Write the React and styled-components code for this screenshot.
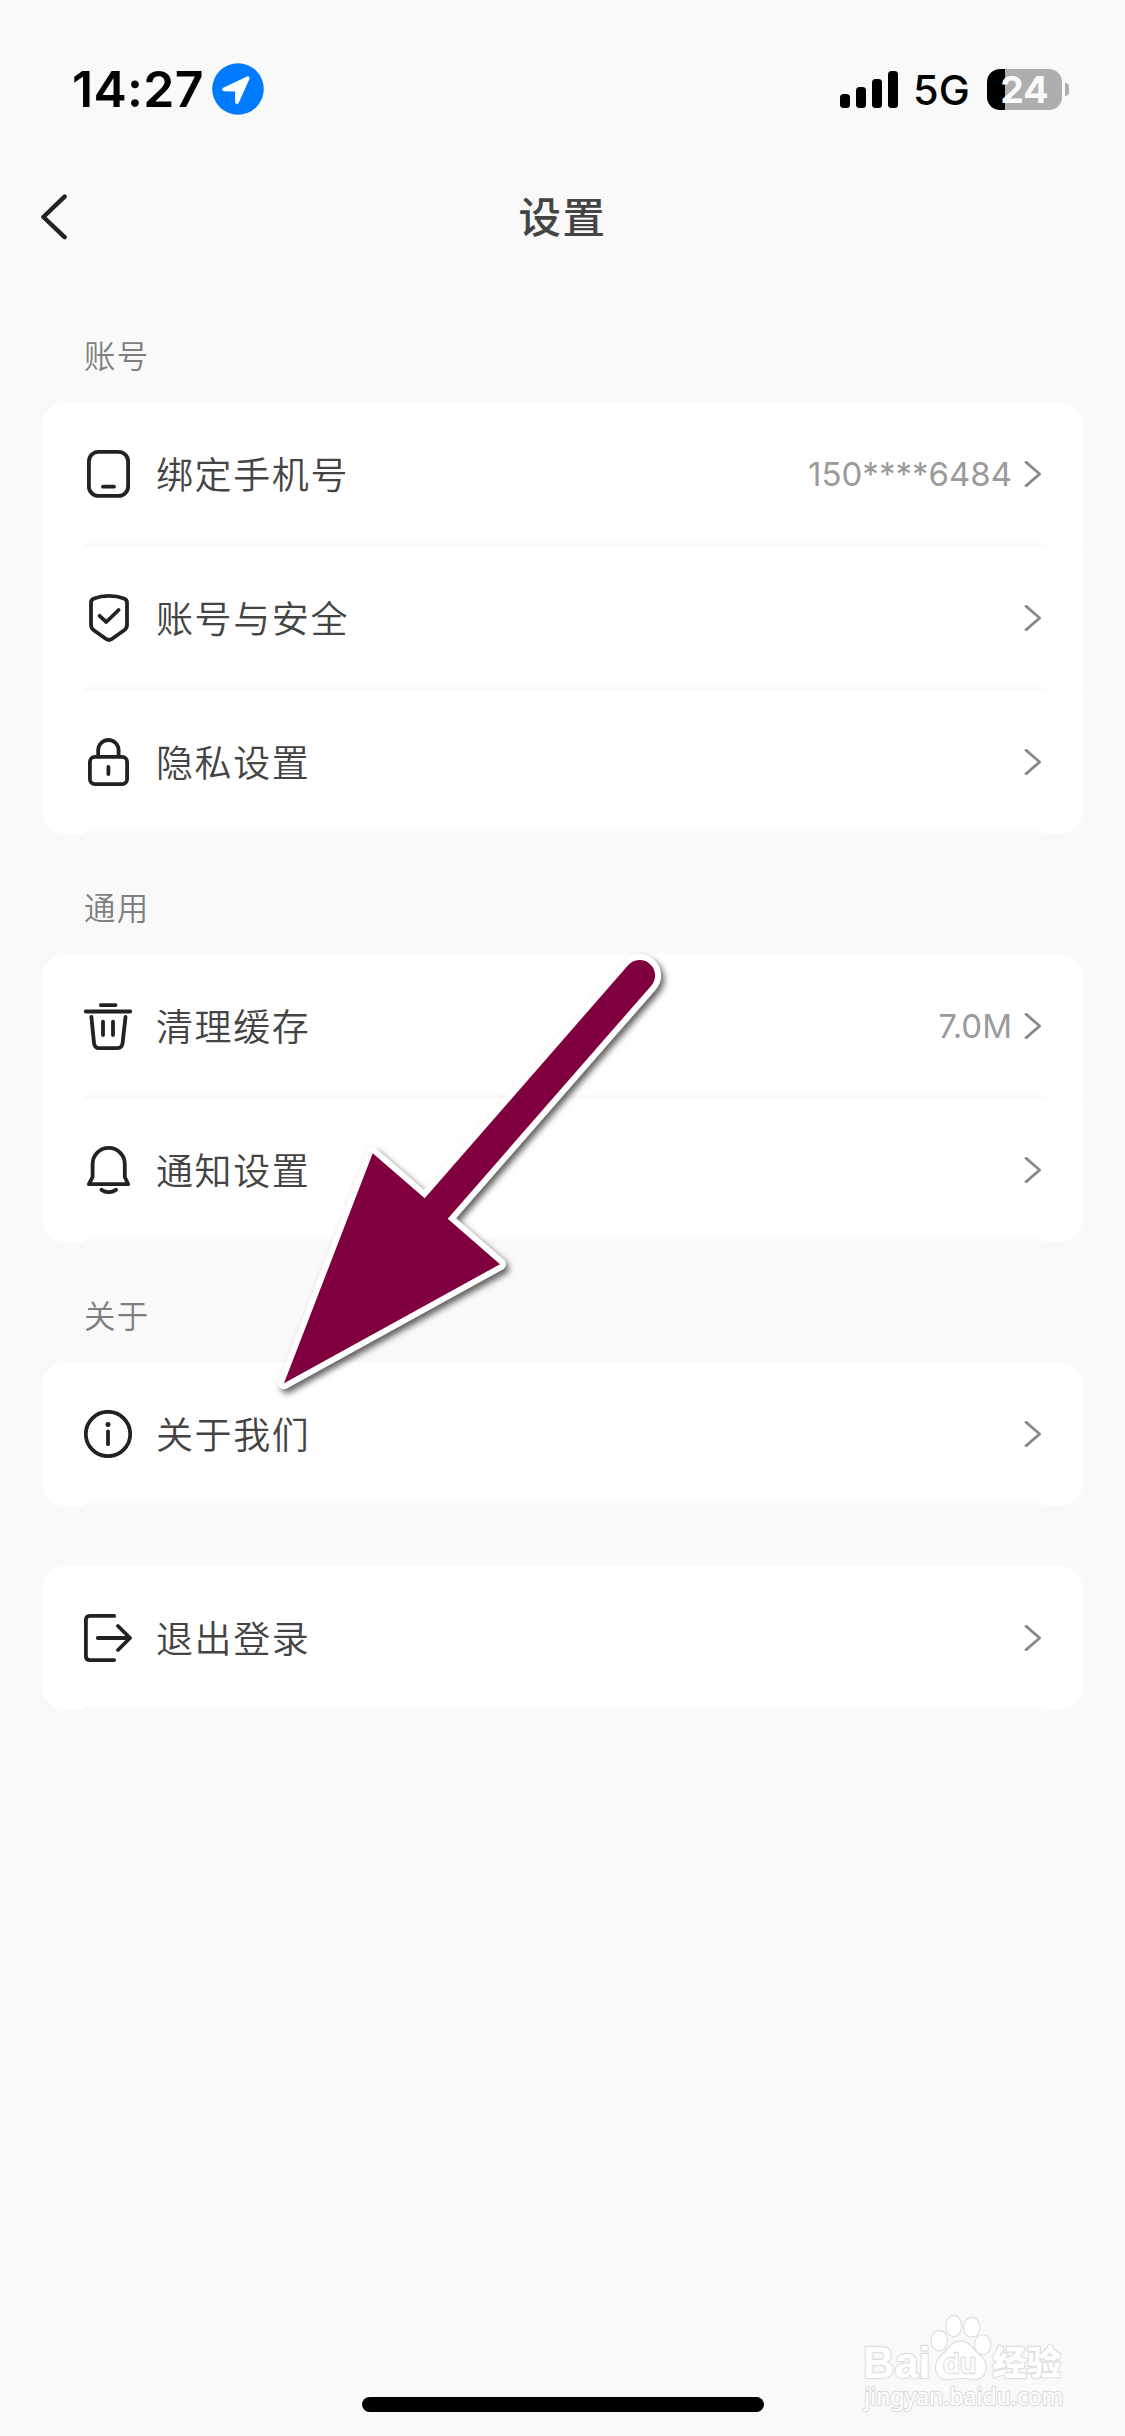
import React from 'react';
import styled, { createGlobalStyle } from 'styled-components';

const GlobalStyle = createGlobalStyle`
  * { box-sizing: border-box; }
  body { margin: 0; background: #f9f9f9; }
`;

const Screen = styled.div`
  position: relative;
  width: 1125px;
  height: 2436px;
  overflow: hidden;
  display: flex;
  flex-direction: column;
  background: #f9f9f9;
  color: #444;
  font-family: Inter, 'Noto Sans CJK SC', sans-serif;
`;

const StatusBar = styled.header`
  display: flex;
  justify-content: space-between;
  align-items: center;
  height: 150px;
  padding: 28px 56px 0 72px;
  color: #000;
`;

const StatusGroup = styled.div`
  display: flex;
  align-items: center;
`;

const Clock = styled.span`
  width: 140px;
  font-size: 50px;
  font-weight: 600;
  line-height: 60px;
  letter-spacing: 0.3px;
  white-space: nowrap;
`;

const Signal = styled.div`
  display: flex;
  align-items: flex-end;
  gap: 6px;
  height: 37px;
`;

const SignalBar = styled.i`
  width: 10px;
  height: ${(p) => p.$height}px;
  border-radius: 3.5px;
  background: #000;
`;

const Network = styled.span`
  width: 71px;
  padding: 2px 0 0 15px;
  font-size: 41.5px;
  font-weight: 450;
  line-height: 50px;
  white-space: nowrap;
`;

const Battery = styled.div`
  display: flex;
  align-items: center;
  justify-content: center;
  width: 75px;
  height: 41px;
  margin-left: 18px;
  border-radius: 13px;
  background: linear-gradient(to right, #000 18px, #aeaeae 18px);
  color: #f9f9f9;
  font-size: 37.5px;
  font-weight: 650;
  line-height: 41px;
`;

const BatteryTip = styled.i`
  width: 4px;
  height: 13px;
  margin-left: 3px;
  border-radius: 0 6px 6px 0;
  background: #aeaeae;
`;

const NavBar = styled.nav`
  display: grid;
  grid-template-columns: 80px 1fr 80px;
  align-items: center;
  height: 132px;
  padding: 1px 41px 0 40px;
`;

const Title = styled.h1`
  margin: 0;
  padding: 3px 0 0 1px;
  font-size: 42.5px;
  font-weight: 500;
  line-height: 60px;
  letter-spacing: 1.6px;
  text-align: center;
`;

const Main = styled.main`
  padding: 0 42px;
`;

const SectionLabel = styled.h2`
  display: flex;
  align-items: center;
  height: 120px;
  margin: 0;
  padding: 24px 0 0 42px;
  color: #7f7f7f;
  font-size: 31.5px;
  font-weight: 350;
  letter-spacing: 1.2px;
`;

const Spacer = styled.div`
  height: 60px;
`;

const Card = styled.section`
  border-radius: 24px;
  background: #fff;
`;

const Row = styled.div`
  display: flex;
  align-items: center;
  height: 144px;
  padding: 0 42px;
`;

const RowLabel = styled.span`
  flex: 1;
  margin-left: 24px;
  padding-top: 3px;
  font-size: 37px;
  font-weight: 350;
  line-height: 54px;
  letter-spacing: 1.6px;
`;

const RowValue = styled.span`
  margin-right: 12px;
  color: #9b9b9b;
  font-size: 33px;
  font-weight: 400;
  line-height: 40px;
`;

const Divider = styled.div`
  display: grid;
  grid-template-columns: 1fr 42px;
  height: 3px;
  margin: -3px 0 0 42px;
  background: linear-gradient(to right, #f9f9f9 957px, transparent 957px);
`;

const DividerTail = styled.i`
  grid-column: 2;
  border-bottom: 1px solid #fafafa;
`;

const Glyph = styled.svg`
  display: block;
  flex: none;
  fill: none;
  stroke: ${(p) => p.$color || '#222'};
  stroke-width: ${(p) => p.$weight || 3.8};
  stroke-linecap: round;
  stroke-linejoin: round;
`;

const Pointer = styled.svg`
  position: absolute;
  left: 260px;
  top: 930px;
  filter: drop-shadow(3px 4px 3px rgba(0, 0, 0, 0.62));
`;

const Watermark = styled.svg`
  position: absolute;
  left: 820px;
  top: 2290px;
`;

const HomeIndicator = styled.div`
  width: 402px;
  height: 15px;
  margin: auto auto 24px;
  border-radius: 8px;
  background: #000;
`;

const icons = {
  phone: (
    <>
      <rect x="4.9" y="1.9" width="39.2" height="44" rx="9.5" />
      <path d="M19 36.7H30" />
    </>
  ),
  shield: (
    <>
      <path d="M10 4.5C19 1.1 31 1.1 40 4.5Q43 5.8 43 8.5V31Q43 34 40.5 36L27.5 45.2Q25 46.8 22.5 45.2L9.5 36Q7 34 7 31V8.5Q7 5.8 10 4.5Z" />
      <path d="M15.6 21.8L22.3 28L34.6 16" />
    </>
  ),
  lock: (
    <>
      <rect x="5.9" y="18.9" width="37.2" height="27.2" rx="5" />
      <path d="M14.2 18V12.2A10.2 10.2 0 0 1 34.6 12.2V18M24.4 29V36" />
    </>
  ),
  trash: (
    <path d="M16.8 3.1H31.6M1.8 9.5H46.2M7.4 15L10 41Q10.6 46.1 15 46.1H33.5Q38 46.1 38.6 41L41.5 15M19 19.6V33M29 19.6V33" />
  ),
  bell: (
    <path d="M8.6 31V18A16.1 16.1 0 0 1 40.8 18V31L44.2 38.2H4.9ZM17.5 43.8Q24.7 48.6 31.9 43.8" />
  ),
  info: (
    <>
      <circle cx="24" cy="24" r="22.2" />
      <circle cx="24" cy="14.4" r="2.5" fill="#222" stroke="none" />
      <path d="M24 21.4V34.2" />
    </>
  ),
  logout: (
    <path d="M30.2 1.9H6Q1.9 1.9 1.9 6V42Q1.9 46.1 6 46.1H30.2M13.8 24H46M34 12L46 24L34 36" />
  ),
};

function SettingRow({ icon, label, value }) {
  return (
    <>
      <Row>
        <Glyph width="48" height="48" viewBox="0 0 48 48">{icons[icon]}</Glyph>
        <RowLabel>{label}</RowLabel>
        {value && <RowValue>{value}</RowValue>}
        <Glyph width="17" height="26" viewBox="0 0 17 26" $color="#888" $weight={2.8}>
          <path d="M2.2 1.3L15.6 13L2.2 24.7" strokeLinecap="square" />
        </Glyph>
      </Row>
      <Divider><DividerTail /></Divider>
    </>
  );
}

const groups = [
  {
    title: '账号',
    rows: [
      { icon: 'phone', label: '绑定手机号', value: '150****6484' },
      { icon: 'shield', label: '账号与安全' },
      { icon: 'lock', label: '隐私设置' },
    ],
  },
  {
    title: '通用',
    rows: [
      { icon: 'trash', label: '清理缓存', value: '7.0M' },
      { icon: 'bell', label: '通知设置' },
    ],
  },
  { title: '关于', rows: [{ icon: 'info', label: '关于我们' }] },
  { rows: [{ icon: 'logout', label: '退出登录' }] },
];

export default function App() {
  return (
    <Screen>
      <GlobalStyle />
      <StatusBar>
        <StatusGroup>
          <Clock>14:27</Clock>
          <svg width="52" height="52" viewBox="0 0 52 52">
            <circle cx="26" cy="26" r="25.8" fill="#007aff" />
            <path
              d="M12 26.4L35.8 15.2L25 39.2L24.9 26.6Z"
              fill="#fff"
              stroke="#fff"
              strokeWidth="3.6"
              strokeLinejoin="round"
            />
          </svg>
        </StatusGroup>
        <StatusGroup>
          <Signal>
            <SignalBar $height={14} />
            <SignalBar $height={21} />
            <SignalBar $height={29} />
            <SignalBar $height={37} />
          </Signal>
          <Network>5G</Network>
          <Battery>24</Battery>
          <BatteryTip />
        </StatusGroup>
      </StatusBar>

      <NavBar>
        <Glyph width="27" height="46" viewBox="0 0 27 46" $weight={4.4}>
          <path d="M24.6 2.6L3.4 23L24.6 43.2" />
        </Glyph>
        <Title>设置</Title>
      </NavBar>

      <Main>
        {groups.map((group, i) => (
          <React.Fragment key={i}>
            {group.title ? <SectionLabel>{group.title}</SectionLabel> : <Spacer />}
            <Card>
              {group.rows.map((row) => <SettingRow key={row.icon} {...row} />)}
            </Card>
          </React.Fragment>
        ))}
      </Main>

      <HomeIndicator />

      <Pointer width="430" height="490" viewBox="0 0 430 490">
        <path
          d="M24 453.3L112.7 223.3L164.7 268.3L368.3 35A15.4 15.4 0 1 1 391 56L187.7 288.7L240 334.3Z"
          fill="#80003f"
          stroke="#fff"
          strokeWidth="12"
          strokeLinejoin="round"
          paintOrder="stroke"
        />
      </Pointer>

      <Watermark width="305" height="146" viewBox="0 0 915 438">
        <g fill="#fff" stroke="#dedede" strokeWidth="7" paintOrder="stroke" strokeLinejoin="round">
          <text x="129" y="263" fontSize="132" fontWeight="700" textLength="203" lengthAdjust="spacingAndGlyphs" fontFamily="'Liberation Sans', sans-serif">Bai</text>
          <text x="517" y="255" fontSize="102" fontWeight="900" textLength="206" lengthAdjust="spacingAndGlyphs" fontFamily="'Noto Sans CJK SC', sans-serif">经验</text>
          <text x="133" y="345" fontSize="69" textLength="597" lengthAdjust="spacingAndGlyphs" fontFamily="'Noto Sans', sans-serif">jingyan.baidu.com</text>
          <ellipse cx="358" cy="152" rx="23" ry="29" />
          <ellipse cx="401" cy="108" rx="22" ry="30" />
          <ellipse cx="455" cy="112" rx="23" ry="28" />
          <ellipse cx="488" cy="164" rx="23" ry="28" />
          <path d="M421 155C446 155 453 172 465 184C480 199 497 208 497 232C497 256 480 268 460 267C444 266 437 263 422 263C407 263 399 267 383 268C362 269 348 254 348 232C348 208 364 199 378 185C391 171 397 155 421 155Z" />
          <text x="369" y="248" fontSize="82" fontWeight="500" textLength="99" lengthAdjust="spacingAndGlyphs" fontFamily="Inter, sans-serif">du</text>
        </g>
      </Watermark>
    </Screen>
  );
}
